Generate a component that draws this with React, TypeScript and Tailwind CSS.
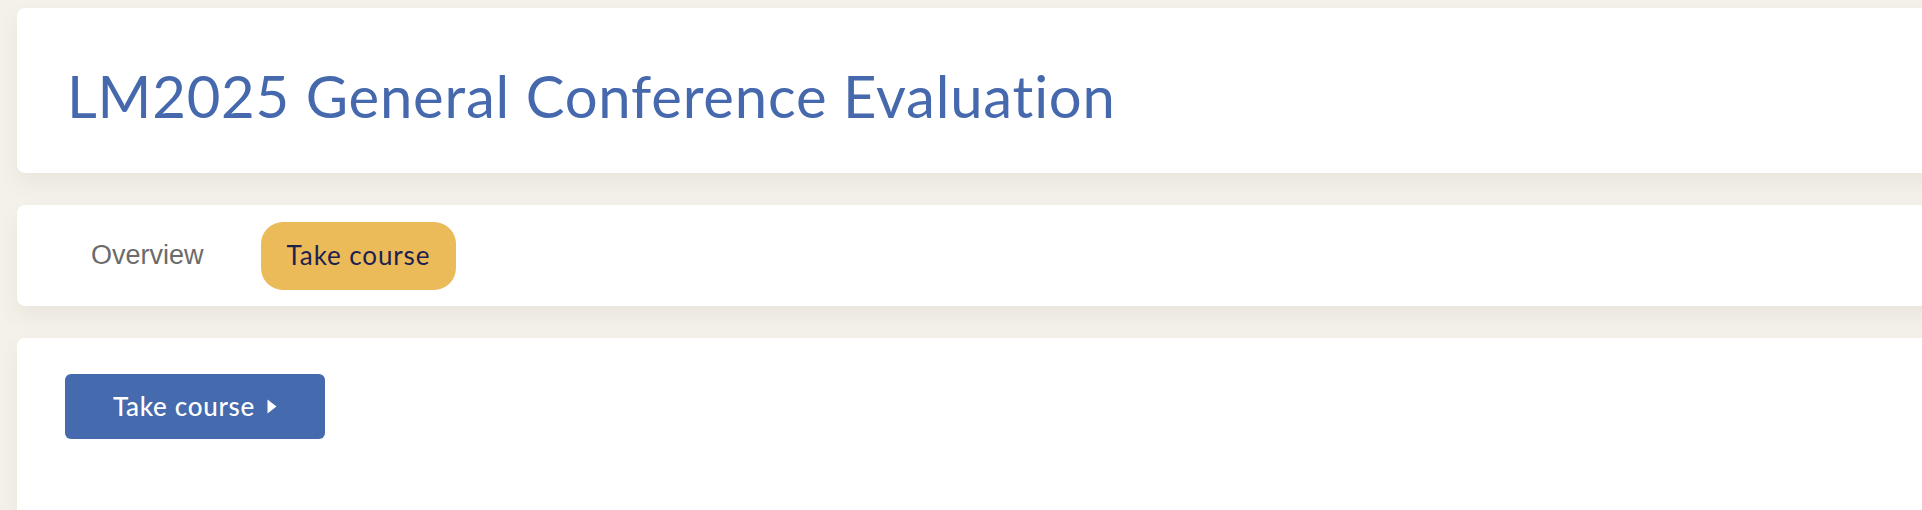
function CaretRight() {
    return (
        <svg width="10" height="15" viewBox="0 0 10 15" className="ml-[12px]" aria-hidden>
            <path d="M0.5 0.5 L9.5 7.5 L0.5 14.5 Z" fill="currentColor" />
        </svg>
    );
}

export default function App() {
    return (
        <div className="h-[510px] w-full overflow-hidden bg-[#f4f1ea] pl-[17px] pt-[8px]">
            <div className="-mr-6 flex h-full flex-col gap-8">
                {/* Title */}
                <div className="flex h-[165px] shrink-0 items-center rounded-lg bg-white pl-[50px] shadow-[0_10px_20px_rgba(120,100,70,0.08)]">
                    <h1 className="mt-[11px] font-['Lato',sans-serif] text-[58px] font-normal leading-none tracking-[0.8px] text-[#4669ad]">
                        LM2025 General Conference Evaluation
                    </h1>
                </div>

                {/* Tabs */}
                <div className="flex h-[101px] shrink-0 items-center rounded-lg bg-white pl-[74px] shadow-[0_10px_20px_rgba(120,100,70,0.08)]">
                    <span className="font-['Liberation_Sans',Arial,sans-serif] text-[27px] text-[#6b6b6b]">Overview</span>
                    <span className="ml-[57px] flex h-[68px] items-center rounded-[22px] bg-[#ecbb59] px-[26px] font-['Lato',sans-serif] text-[26px] font-normal tracking-[0.9px] text-[#1d2150]">
                        Take course
                    </span>
                </div>

                {/* Body */}
                <div className="flex-1 rounded-t-lg bg-white pl-[48px] pt-[36px] shadow-[0_10px_20px_rgba(120,100,70,0.08)]">
                    <button className="flex h-[65px] w-[260px] items-center justify-center rounded-md bg-[#456aad] font-['Lato',sans-serif] text-[26px] font-medium tracking-[0.7px] text-white">
                        Take course
                        <CaretRight />
                    </button>
                </div>
            </div>
        </div>
    );
}
